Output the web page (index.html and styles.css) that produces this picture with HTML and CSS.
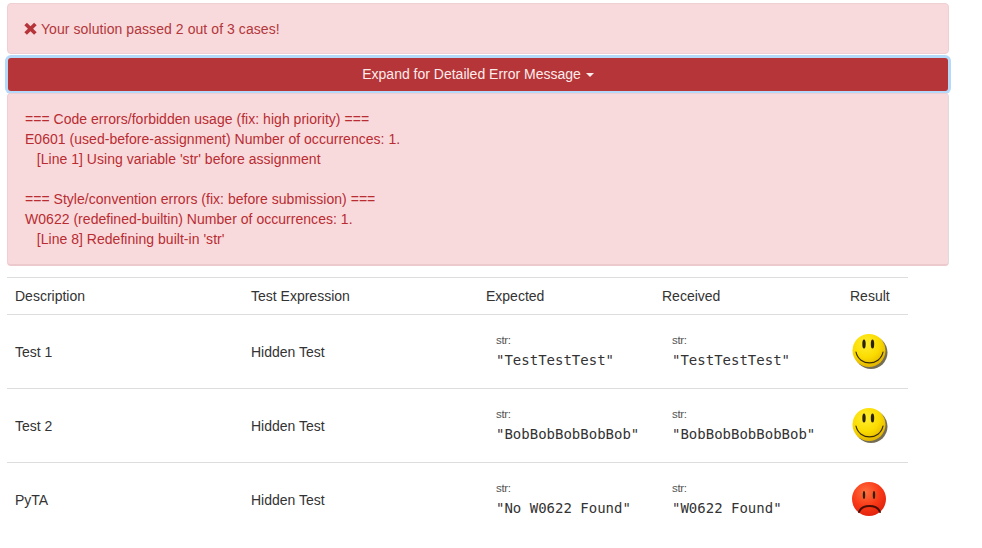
FILE: index.html
```html
<!doctype html>
<html lang="en">
<head>
	<meta charset="utf-8">
	<title>Test results</title>
	<link rel="stylesheet" href="styles.css">
</head>
<body>
<svg class="defs" width="0" height="0">
	<defs>
		<radialGradient id="yellowFace" cx="40%" cy="30%" r="75%">
			<stop offset="0" stop-color="#ffee30"/>
			<stop offset="0.55" stop-color="#fbdc00"/>
			<stop offset="1" stop-color="#e0b000"/>
		</radialGradient>
		<radialGradient id="redFace" cx="40%" cy="30%" r="75%">
			<stop offset="0" stop-color="#ff7040"/>
			<stop offset="0.55" stop-color="#f93a18"/>
			<stop offset="1" stop-color="#e0200c"/>
		</radialGradient>
	</defs>
</svg>

<div class="wrapBox">
	<div class="alert alert-top">
		<svg class="cross" viewBox="0 0 12 12" width="13" height="13"><path d="M2.700 0.600 6 3.900 9.300 0.600 11.700 3 8.400 6.200 11.700 9.400 9.300 11.800 6 8.500 2.700 11.800 0.300 9.400 3.600 6.200 0.300 3Z"/></svg>
		<span>Your solution passed 2 out of 3 cases!</span>
	</div>
	<button class="expand">Expand for Detailed Error Message <i class="caret"></i></button>
	<div class="alert alert-detail">
<pre class="detail">=== Code errors/forbidden usage (fix: high priority) ===
E0601 (used-before-assignment) Number of occurrences: 1.
   [Line 1] Using variable 'str' before assignment

=== Style/convention errors (fix: before submission) ===
W0622 (redefined-builtin) Number of occurrences: 1.
   [Line 8] Redefining built-in 'str'</pre>
	</div>

	<table class="results">
		<colgroup>
			<col class="c1"><col class="c2"><col class="c3"><col class="c4"><col class="c5">
		</colgroup>
		<thead>
			<tr>
				<th>Description</th>
				<th>Test Expression</th>
				<th>Expected</th>
				<th>Received</th>
				<th>Result</th>
			</tr>
		</thead>
		<tbody>
			<tr>
				<td>Test 1</td>
				<td>Hidden Test</td>
				<td><div class="val"><small>str:</small><code>"TestTestTest"</code></div></td>
				<td><div class="val"><small>str:</small><code>"TestTestTest"</code></div></td>
				<td>
					<svg class="face" viewBox="0 0 38 38" width="38" height="38">
						<circle class="shade" cx="20" cy="19.500" r="16.500"/>
						<circle cx="18" cy="17.500" r="16.500" fill="url(#yellowFace)"/>
						<ellipse cx="13" cy="11" rx="1.700" ry="4.500"/>
						<ellipse cx="21.500" cy="11" rx="1.700" ry="4.500"/>
						<path class="mouth" d="M5 19C8 33.500 29 33.500 32 19"/>
					</svg>
				</td>
			</tr>
			<tr>
				<td>Test 2</td>
				<td>Hidden Test</td>
				<td><div class="val"><small>str:</small><code>"BobBobBobBobBob"</code></div></td>
				<td><div class="val"><small>str:</small><code>"BobBobBobBobBob"</code></div></td>
				<td>
					<svg class="face" viewBox="0 0 38 38" width="38" height="38">
						<circle class="shade" cx="20" cy="19.500" r="16.500"/>
						<circle cx="18" cy="17.500" r="16.500" fill="url(#yellowFace)"/>
						<ellipse cx="13" cy="11" rx="1.700" ry="4.500"/>
						<ellipse cx="21.500" cy="11" rx="1.700" ry="4.500"/>
						<path class="mouth" d="M5 19C8 33.500 29 33.500 32 19"/>
					</svg>
				</td>
			</tr>
			<tr>
				<td>PyTA</td>
				<td>Hidden Test</td>
				<td><div class="val"><small>str:</small><code>"No W0622 Found"</code></div></td>
				<td><div class="val"><small>str:</small><code>"W0622 Found"</code></div></td>
				<td>
					<svg class="face" viewBox="0 0 38 38" width="38" height="38">
						<circle cx="18" cy="18" r="17" fill="url(#redFace)"/>
						<ellipse cx="13" cy="14" rx="1.200" ry="4"/>
						<ellipse cx="23" cy="14" rx="1.200" ry="4"/>
						<path class="mouth sad" d="M8 31C11 23 26 23 29 31"/>
					</svg>
				</td>
			</tr>
		</tbody>
	</table>
</div>
</body>
</html>
```

FILE: styles.css
```css
*{ box-sizing: border-box; }
body{ margin: 0; background: #fff; font-family: "Liberation Sans", Arial, sans-serif; font-size: 14px; line-height: 20px; color: #333; }
.defs{ display: block; height: 0; }
.wrapBox{ width: 942px; margin-left: 7px; padding-top: 3px; }

.alert{ background: #f8dadc; border: 1px solid #f0cfd2; border-radius: 4px; color: #b92c32; }
.alert-top{ height: 51px; padding: 15px 16px; display: flex; align-items: center; gap: 4px; color: #b3363b; letter-spacing: 0.07px; }
.cross{ fill: #b5353a; flex: none; }
.alert-detail{ height: 173px; padding: 15px 16px 15px 17px; border-bottom: 2px solid #ecc9cc; border-right-color: #ddd; }
.detail{ margin: 0; font: inherit; letter-spacing: 0.03px; white-space: pre-wrap; }

.expand{ display: block; width: 940px; height: 33px; margin: 4px 1px 2px; padding: 0 0 1px; background: #b63538; border: 0; border-radius: 3px; color: #fbecec; font: inherit; text-align: center; box-shadow: 0 0 0 3px #b5d9f8; }
.caret{ display: inline-block; width: 0; height: 0; margin-left: 1px; vertical-align: middle; border-top: 4px solid #fbecec; border-left: 4px solid transparent; border-right: 4px solid transparent; }

.results{ width: 901px; margin-top: 11px; border-collapse: collapse; table-layout: fixed; }
.c1{ width: 236px; }
.c2{ width: 235px; }
.c3{ width: 176px; }
.c4{ width: 188px; }
.c5{ width: 66px; }
.results th{ height: 37px; padding: 0 8px; font-weight: normal; text-align: left; border-top: 1px solid #ddd; border-bottom: 1px solid #ddd; }
.results td{ height: 74px; padding: 0 8px; border-bottom: 1px solid #ddd; }
.results tbody tr:last-child td{ border-bottom: 0; }

.val{ padding: 0 0 2px 10px; }
.val small{ display: block; font-size: 11.500px; line-height: 14px; color: #555; letter-spacing: -0.3px; }
.val code{ display: block; margin-top: 4px; font-family: "DejaVu Sans Mono", monospace; font-size: 14px; line-height: 18px; color: #333; white-space: pre; }

.face{ display: block; margin-left: 1px; }
.face ellipse{ fill: #2b2200; }
.shade{ fill: #5c5338; opacity: 0.85; }
.mouth{ fill: none; stroke: #3a2c00; stroke-width: 1.200; stroke-linecap: round; }
.mouth.sad{ stroke: #4a0e06; stroke-width: 2; }
```
